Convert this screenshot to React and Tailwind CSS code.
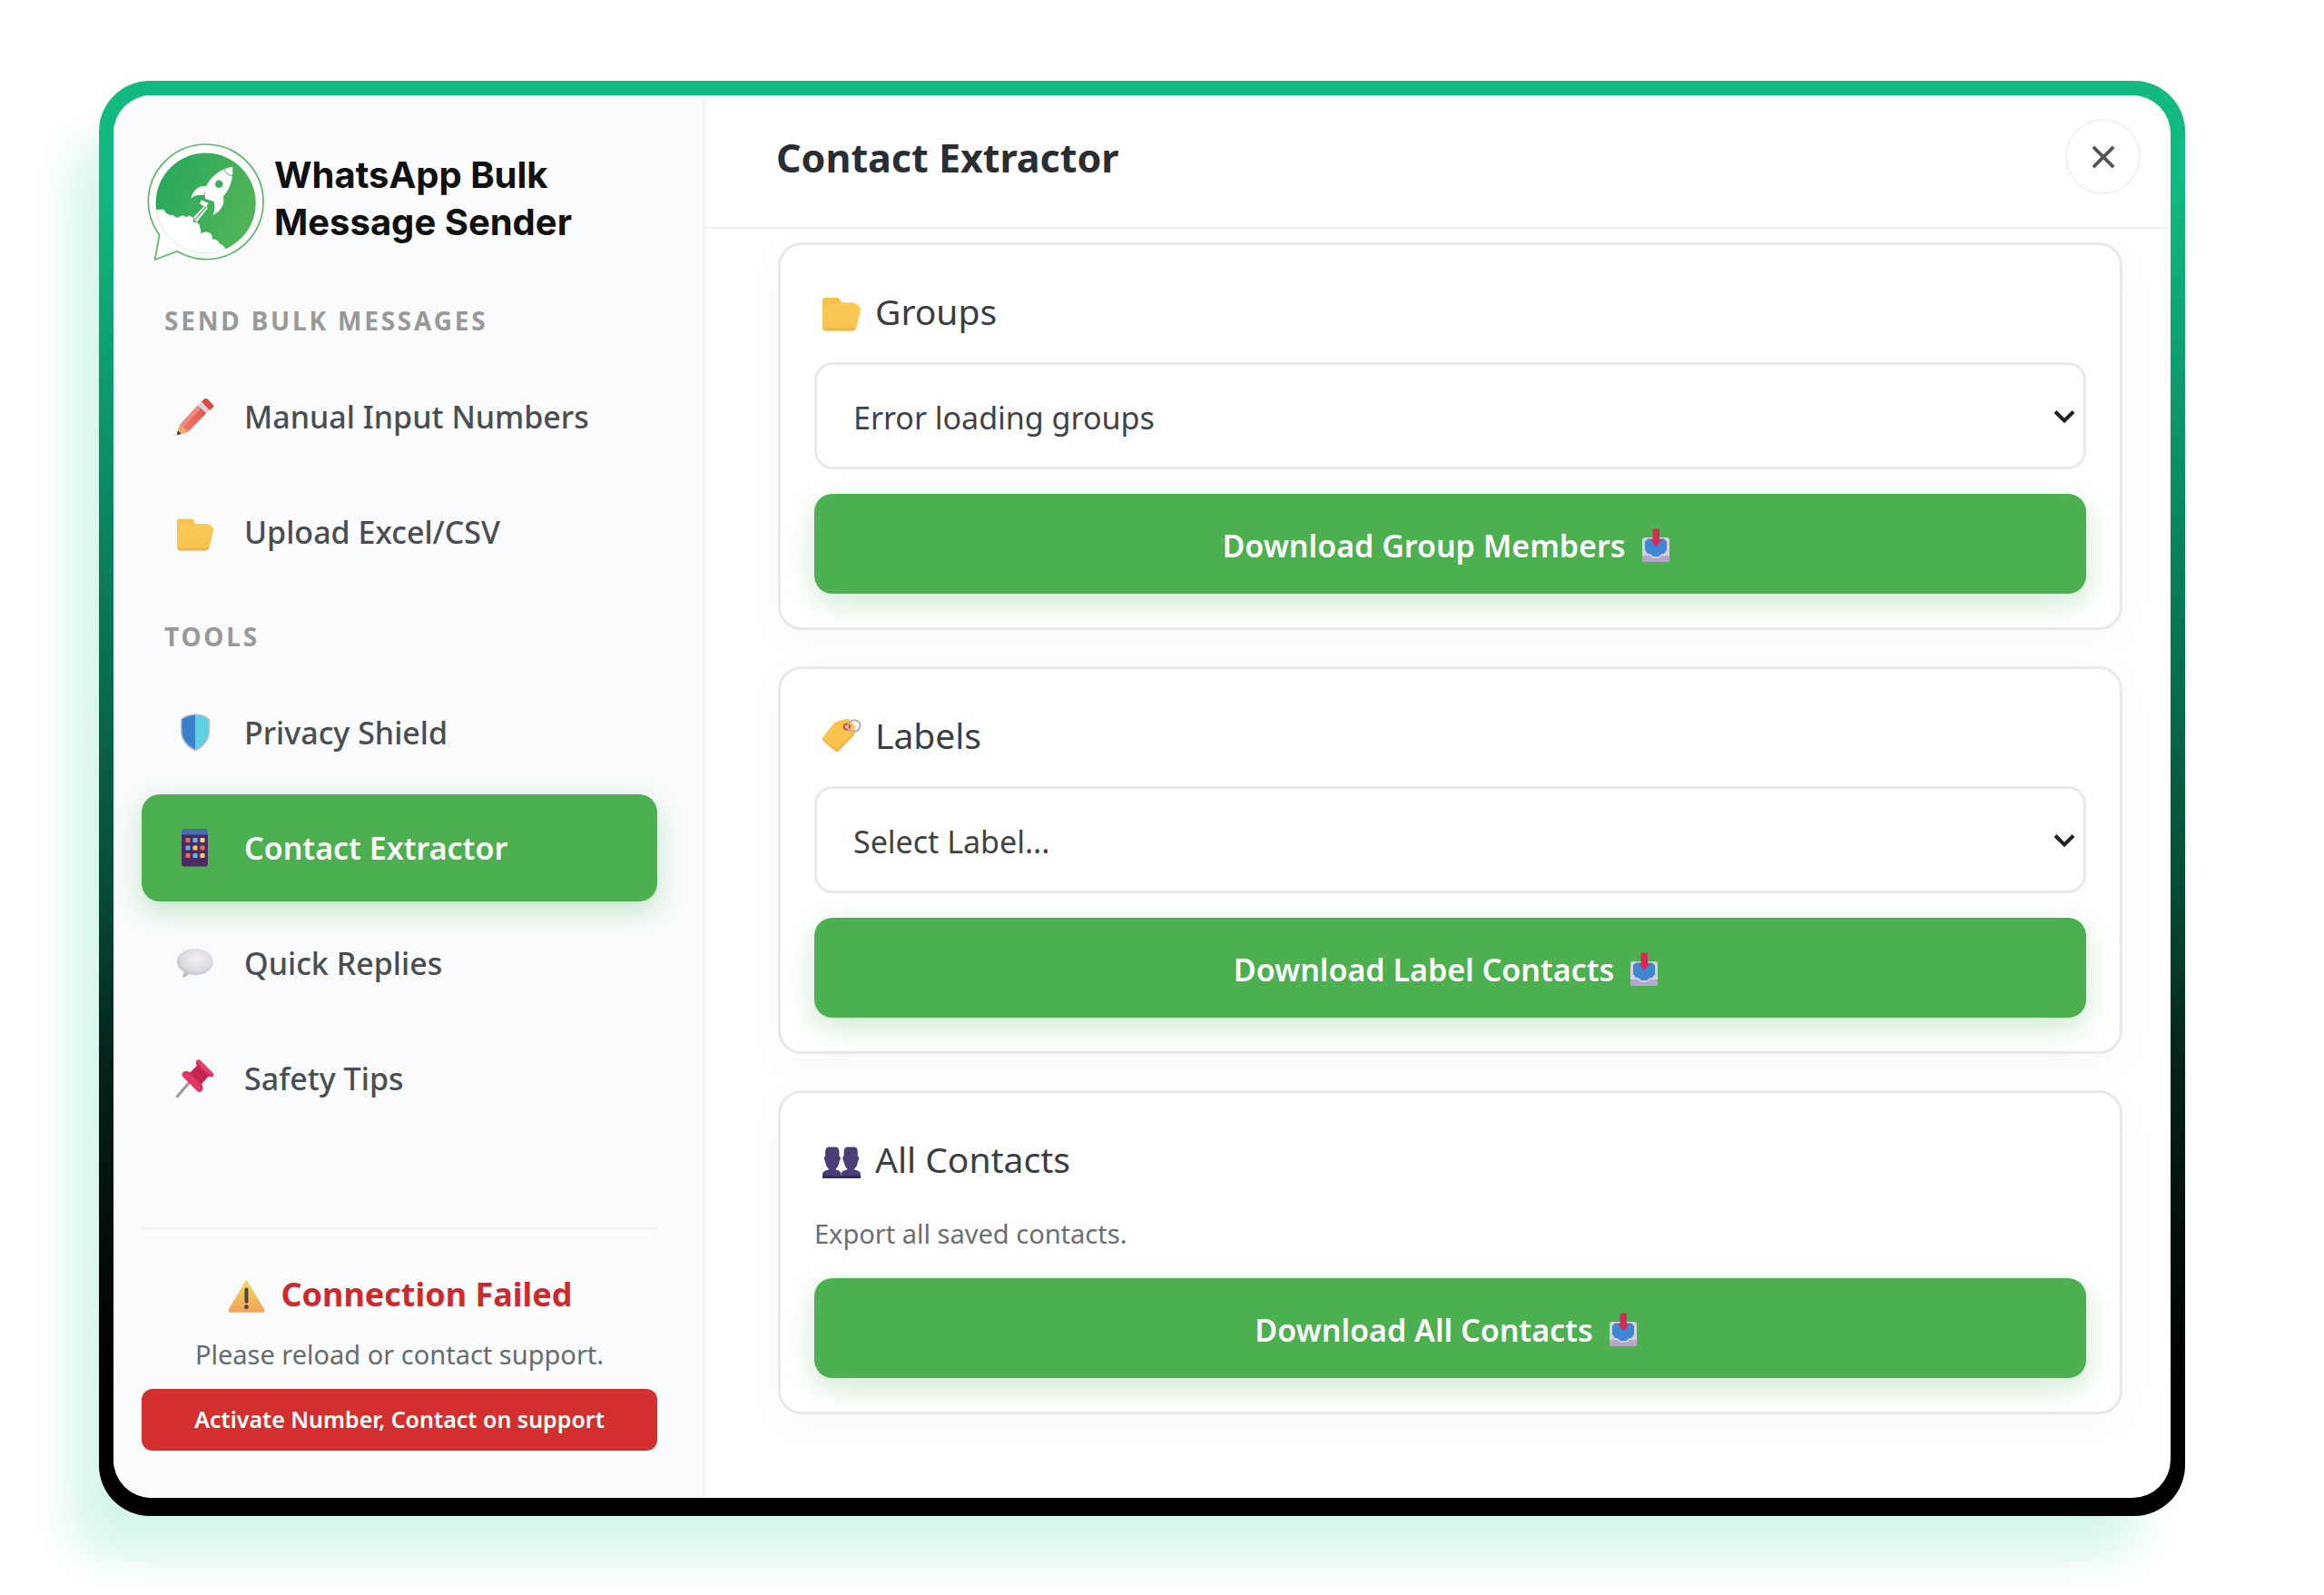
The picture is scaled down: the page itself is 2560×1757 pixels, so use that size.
import React from "react";

/* ---------- Brand mark ---------- */

function BrandMark() {
  return (
    <svg viewBox="36 52 392 392" className="size-[130px] shrink-0" aria-hidden="true">
      <defs>
        <linearGradient id="brand" x1="0" y1="0.3" x2="1" y2="0.7">
          <stop offset="0" stopColor="#27a85c" />
          <stop offset="1" stopColor="#55b556" />
        </linearGradient>
        <clipPath id="disc">
          <circle cx="231" cy="250" r="166" />
        </clipPath>
      </defs>
      <path
        d="M62 438 L77 356 C52 322 40 288 40 246 A191 191 0 1 1 231 437 C196 437 164 426 136 410 Z"
        fill="#fff"
        stroke="#5cb56a"
        strokeWidth="5"
        strokeLinejoin="round"
      />
      <g clipPath="url(#disc)">
        <rect x="60" y="80" width="340" height="340" fill="url(#brand)" />
        <path
          d="M50 272 L92 271 Q98 290 124 290 Q134 304 146 294 Q158 288 166 297 Q178 286 190 300 L190 314 Q213 312 212 334 Q218 344 212 352 Q234 340 248 352 Q254 360 252 370 Q270 368 278 386 Q288 388 298 404 L298 450 L50 450 Z"
          fill="#fff"
        />
        <path d="M190 298 L226 260 L238 266 L200 314 Z" fill="#fff" />
        <path d="M196 304 L231 264" stroke="#3bad5a" strokeWidth="4" fill="none" />
      </g>
      <path d="M320 130 C285 133 246 160 232 196 C228 210 226 222 230 236 L262 246 C298 232 324 186 320 130 Z" fill="#fff" />
      <path d="M292 138 C298 152 308 158 322 160" stroke="#41ae59" strokeWidth="3" fill="none" />
      <circle cx="275" cy="187" r="13" fill="#3fae59" />
      <path d="M234 193 C206 192 190 206 181 235 C194 224 206 221 224 224 Z" fill="#fff" />
      <path d="M288 226 C296 250 286 274 254 291 C262 276 262 262 258 246 Z" fill="#fff" />
      <path d="M215 240 L240 250 L232 264 L212 254 Z" fill="#fff" />
      <path d="M218 234 L244 250" stroke="#3bad5a" strokeWidth="3" />
    </svg>
  );
}

/* ---------- Emoji-style icons ---------- */

function Icon({ className, children }) {
  return (
    <svg viewBox="0 0 42 42" className={`shrink-0 overflow-visible ${className}`} aria-hidden="true">
      {children}
    </svg>
  );
}

function PencilIcon({ className }) {
  return (
    <Icon className={className}>
      <defs>
        <linearGradient id="pencil" x1="1" y1="0" x2="0" y2="1">
          <stop offset="0" stopColor="#e2504f" />
          <stop offset="1" stopColor="#f0806a" />
        </linearGradient>
      </defs>
      <path d="M24 8.500 L33.500 17 L13 38 L4 30 Z" fill="url(#pencil)" />
      <path d="M24 8.500 L27.500 12 L7.500 33 L4 30 Z" fill="#f08a80" />
      <path d="M4 30 L13 38 L2 41 Q0.500 41 1 39.500 Z" fill="#f3a56b" />
      <path d="M2 36.500 L5.500 40 L2 41 Q0.500 41 1 39.500 Z" fill="#3f3444" />
      <path d="M24 8.500 L28 4.500 L37 13 L33.500 17 Z" fill="#ddd3dc" />
      <path d="M28 4.500 L31 1.500 Q33 0 35 2 L40.500 7.500 Q42 9.500 40.500 11 L37 14 Z" fill="#dc4a48" />
    </Icon>
  );
}

function FolderIcon({ className }) {
  return (
    <Icon className={className}>
      <defs>
        <linearGradient id="folder" x1="0" y1="0" x2="0" y2="1">
          <stop offset="0" stopColor="#fbcb55" />
          <stop offset="1" stopColor="#f8c453" />
        </linearGradient>
      </defs>
      <path d="M1 9 Q1 6.500 3.500 6.500 H16.500 Q18 6.500 19 8 L21.500 12 H32 Q36 12 36 16 V39 H1 Z" fill="#f8c24c" />
      <path
        d="M3 16 Q3.500 13 7 13 H20 Q21.500 13 22.500 12 H34 Q36 12 37.500 13.500 L40.500 16.500 Q41.500 17.500 41.200 19 L36.500 38.500 Q35.500 41.500 32 41.500 H5 Q1 41.500 1 37.500 Z"
        fill="url(#folder)"
      />
      <path d="M1.200 38.500 Q2 41.500 5 41.500 H32 Q35.500 41.500 36.500 38.500 Z" fill="#e6ad4c" opacity=".6" />
    </Icon>
  );
}

function ShieldIcon({ className }) {
  return (
    <Icon className={className}>
      <path
        d="M21 0.500 C16 0.500 11 1.500 6.500 5 Q5 6 5 8 V19 C5 30 13 38 21 41.500 C29 38 37 30 37 19 V8 Q37 6 35.500 5 C31 1.500 26 0.500 21 0.500 Z"
        fill="#b4b9c8"
      />
      <path d="M21 2 C16 2 11 3.500 6.500 6.500 V19 C6.500 29 14 36 21 39.500 Z" fill="#3a80cc" />
      <path d="M21 2 C26 2 31 3.500 35.500 6.500 V19 C35.500 29 28 36 21 39.500 Z" fill="#5ed0e0" />
    </Icon>
  );
}

function PhoneIcon({ className }) {
  const colors = ["#ee6a50", "#5bb8f0", "#f9d36b", "#5bb8f0", "#f9c84e", "#ee6a50", "#ee6a50", "#5bb8f0", "#f9d36b"];
  return (
    <Icon className={className}>
      <rect x="6" y="0.500" width="29" height="41" rx="3" fill="#4b2b63" />
      <path d="M6 6.500 V3.500 Q6 0.500 9 0.500 H32 Q35 0.500 35 3.500 V6.500 Z" fill="#4a6fb0" />
      {colors.map((c, i) => (
        <rect key={i} x={10.5 + (i % 3) * 8} y={10 + Math.floor(i / 3) * 8.5} width="5" height="5" rx="1.200" fill={c} />
      ))}
    </Icon>
  );
}

function BubbleIcon({ className }) {
  return (
    <Icon className={className}>
      <defs>
        <radialGradient id="bubble" cx=".55" cy=".35" r=".7">
          <stop offset="0" stopColor="#f1eff3" />
          <stop offset=".6" stopColor="#dddbe2" />
          <stop offset="1" stopColor="#b8b0c4" />
        </radialGradient>
      </defs>
      <path
        d="M21 5 C32 5 41 11 41 19.500 C41 28 32 34 21.500 34 C19 34 17 33.700 15 33 L9 36.500 Q7 37 7.500 35 L8.500 30.500 C4 28 1 24 1 19.500 C1 11 10 5 21 5 Z"
        fill="url(#bubble)"
      />
    </Icon>
  );
}

function PinIcon({ className }) {
  return (
    <Icon className={className}>
      <path d="M14 26 L1.500 40.500" stroke="#9b9aa0" strokeWidth="3.200" strokeLinecap="round" />
      <path
        d="M22.500 1.500 Q25 -0.500 27.500 2 L40.500 15 Q42.500 18 39 19.500 L35.500 18.500 L28 27 Q31 33 27.500 35.500 Q25 36.500 22.500 34 L7.500 19 Q5 16 8 14 Q11 12 15.500 14.500 L23 7 Q21 4 22.500 1.500 Z"
        fill="#cf2a57"
      />
      <path d="M23 7 L35.500 18.500 L28 27 L15.500 14.500 Z" fill="#c4264f" />
      <path d="M22.500 1.500 Q25 -0.500 27.500 2 L40.500 15 Q42 17 40.500 18.500 Q30 14 22.500 1.500 Z" fill="#e3426f" />
      <path d="M7 18.500 Q7 14 11 14 Q22 20 28.500 32 Q28 36 25 36 Z" fill="#e23763" />
    </Icon>
  );
}

function WarningIcon({ className }) {
  return (
    <Icon className={className}>
      <defs>
        <linearGradient id="warn" x1="0" y1="0" x2="0" y2="1">
          <stop offset="0" stopColor="#fbd65c" />
          <stop offset="1" stopColor="#eda558" />
        </linearGradient>
      </defs>
      <path d="M19.500 7.500 Q20.500 5.500 21.500 7.500 L38.500 36 Q39.500 39 36.500 39 H4.500 Q1.500 39 2.500 36 Z" fill="url(#warn)" />
      <path d="M20.500 16 V28" stroke="#4d4340" strokeWidth="3.600" strokeLinecap="round" />
      <circle cx="20.500" cy="33.500" r="2.200" fill="#4d4340" />
    </Icon>
  );
}

function TagIcon({ className }) {
  return (
    <Icon className={className}>
      <path
        d="M26 3.500 L15 7 Q13.500 7.500 12.500 9 L1 23.500 Q0 25 1.500 26.500 L14.500 38 Q16.500 39 18 37.500 L34 21 Q35 20 35 18 V11 L29 4.500 Q27.500 3 26 3.500 Z"
        fill="#fac44f"
      />
      <path d="M1 24.500 L1.500 26.500 L14.500 38 Q16.500 39 18 37.500 L34 21 L35 17 L16 34.500 Z" fill="#f2ad49" opacity=".6" />
      <circle cx="26.500" cy="12" r="3" fill="#f0b9a6" stroke="#d64a43" strokeWidth="2" />
      <path d="M27 12.500 Q28.500 5 35 5 Q41 6 40.500 11 Q39.500 17 33.500 17 Q29.500 16.500 27 13" fill="none" stroke="#b3b0b6" strokeWidth="1.800" />
    </Icon>
  );
}

function PeopleIcon({ className }) {
  return (
    <Icon className={className}>
      <g fill="#4a3d78">
        <path d="M8 8 H14.500 Q18.500 8 18.500 13 V17 L20 20 L18.500 24 Q17 30 15 31 V32 Q20.500 33 20.500 37 V40 H1 V37 Q1 33 7.500 32 V31 Q5 29 4 24 L2.500 20 L4 17 V13 Q4 8 8 8 Z" />
        <path d="M27.500 8 H34 Q38 8 38 13 V17 L39.500 20 L38 24 Q37 29 34.500 31 V32 Q41 33 41 37 V40 H20.500 V37 Q20.500 33 27 32 V31 Q25 30 23.500 24 L22 20 L23.500 17 V13 Q23.500 8 27.500 8 Z" />
      </g>
      <path d="M1 38.500 H41 V41 H1 Z" fill="#2f2a52" />
    </Icon>
  );
}

function InboxIcon({ className }) {
  return (
    <Icon className={className}>
      <rect x="6" y="12" width="30" height="27" rx="3" fill="#d5d0de" />
      <path d="M6 32 H14 L18 35 H24 L28 32 H36 V36 Q36 39 33 39 H9 Q6 39 6 36 Z" fill="#b6a6c9" />
      <path d="M12 13.500 H30 L33 16.500 V26 L30 30 H27.500 L24 33 H18 L14.500 30 H12 L9 26 V16.500 Z" fill="#3f86d3" />
      <path d="M17.500 3.500 Q17.500 2.500 18.500 2.500 H24 Q25 2.500 25 3.500 V14.500 H27.500 L21.200 22 L15 14.500 H17.500 Z" fill="#d32d57" />
    </Icon>
  );
}

/* ---------- Sidebar ---------- */

const sections = [
  {
    title: "SEND BULK MESSAGES",
    items: [
      { label: "Manual Input Numbers", icon: PencilIcon },
      { label: "Upload Excel/CSV", icon: FolderIcon },
    ],
  },
  {
    title: "TOOLS",
    items: [
      { label: "Privacy Shield", icon: ShieldIcon },
      { label: "Contact Extractor", icon: PhoneIcon, active: true },
      { label: "Quick Replies", icon: BubbleIcon },
      { label: "Safety Tips", icon: PinIcon },
    ],
  },
];

function NavItem({ label, icon: Glyph, active }) {
  return (
    <button
      type="button"
      aria-current={active ? "page" : undefined}
      className={`flex h-[118px] w-full items-center gap-[33px] rounded-[20px] pl-[38px] text-left text-[34px] ${
        active
          ? "bg-[#4caf50] font-semibold text-white shadow-[0_10px_30px_rgba(76,175,80,0.3)]"
          : "font-medium text-[#4a4d52]"
      }`}
    >
      <Glyph className="size-[42px]" />
      <span>{label}</span>
    </button>
  );
}

function Sidebar() {
  return (
    <aside className="flex w-[652px] shrink-0 flex-col border-r-3 border-[#f1f3f4] bg-[#f9fbfc] pt-[53px] pr-[50px] pb-[52px] pl-[31px]">
      <div className="flex items-center gap-[10px] pl-[6px]">
        <BrandMark />
        <div className="pb-2 font-['Inter',sans-serif] text-[40px] leading-[52px] font-bold whitespace-nowrap text-[#111]">
          WhatsApp Bulk
          <br />
          Message Sender
        </div>
      </div>

      <nav className="mt-[9px]">
        {sections.map((section) => (
          <section key={section.title}>
            <h2 className="mt-9 mb-[27px] pl-[25px] text-[28px] leading-10 font-bold tracking-widest text-[#999]">
              {section.title}
            </h2>
            <div className="flex flex-col gap-[9px]">
              {section.items.map((item) => (
                <NavItem key={item.label} {...item} />
              ))}
            </div>
          </section>
        ))}
      </nav>

      <footer className="mt-auto flex flex-col items-center border-t-2 border-[#eef0f0] pt-11">
        <p className="flex items-center gap-[14px] text-[36px] leading-[56px] font-bold text-[#ce2a2e]">
          <WarningIcon className="size-[46px]" />
          Connection Failed
        </p>
        <p className="mt-4 text-[29px] leading-[44px] text-[#666b70]">Please reload or contact support.</p>
        <button
          type="button"
          className="mt-4 h-[68px] w-full rounded-xl bg-[#d32f2f] text-[25px] font-semibold text-white"
        >
          Activate Number, Contact on support
        </button>
      </footer>
    </aside>
  );
}

/* ---------- Main panel ---------- */

function Card({ icon: Glyph, title, field, children }) {
  return (
    <section className="rounded-[26px] border-3 border-[#e8e9ea] bg-white p-[37px] shadow-[0_10px_50px_rgba(0,0,0,0.03)]">
      <h3 className="mb-5 flex h-[72px] items-center gap-[15px] pl-2 text-[39px] font-normal text-[#3a3d44]">
        <Glyph className="size-11" />
        {field ? <label htmlFor={field}>{title}</label> : title}
      </h3>
      {children}
    </section>
  );
}

function SelectField({ id, placeholder }) {
  return (
    <div className="relative mb-[27px]">
      <select
        id={id}
        className="h-[118px] w-full appearance-none rounded-[20px] border-3 border-[#e8e9ea] bg-white pt-1 pr-16 pl-10 text-[34px] text-[#3f4248]"
      >
        <option>{placeholder}</option>
      </select>
      <svg
        viewBox="0 0 24 16"
        className="pointer-events-none absolute top-[52px] right-3 h-4 w-6"
        fill="none"
        stroke="#222"
        strokeWidth="4"
        aria-hidden="true"
      >
        <path d="M2 2.500 L12 12.500 L22 2.500" />
      </svg>
    </div>
  );
}

function DownloadButton({ children }) {
  return (
    <button
      type="button"
      className="flex h-[110px] w-full items-center justify-center gap-3 rounded-[20px] bg-[#4caf50] pt-1 pr-1 text-[34px] font-semibold text-white shadow-[0_10px_32px_rgba(76,175,80,0.28)]"
    >
      {children}
      <InboxIcon className="size-[42px]" />
    </button>
  );
}

export default function App() {
  return (
    <div className="bg-white pt-[89px] pr-[153px] pb-[87px] pl-[109px] font-['Noto_Sans',sans-serif]">
      <div className="rounded-[56px] bg-[linear-gradient(180deg,#12b981_0%,#12b981_7%,#0a8a62_29%,#054a35_57%,#06231b_68%,#020a07_83%,#000_92%)] px-4 pt-4 pb-5 shadow-[-40px_55px_50px_-10px_#d5f6ec]">
        <div className="flex overflow-hidden rounded-[42px] bg-white">
          <Sidebar />
          <main className="min-w-0 flex-1">
            <header className="flex items-center justify-between border-b-2 border-[#f1f2f3] pt-[26px] pr-[33px] pb-9 pl-[78px]">
              <h1 className="pt-1 text-[43px] font-bold text-[#2a2d31]">Contact Extractor</h1>
              <button
                type="button"
                aria-label="Close"
                className="flex size-[83px] items-center justify-center rounded-full border-2 border-[#f0f1f2]"
              >
                <svg viewBox="0 0 28 28" className="size-[26px]" stroke="#555" strokeWidth="4" aria-hidden="true">
                  <path d="M2 2 L26 26 M26 2 L2 26" />
                </svg>
              </button>
            </header>

            <div className="flex flex-col gap-10 pt-[15px] pr-[53px] pb-[92px] pl-20">
              <Card icon={FolderIcon} title="Groups" field="group">
                <SelectField id="group" placeholder="Error loading groups" />
                <DownloadButton>Download Group Members</DownloadButton>
              </Card>
              <Card icon={TagIcon} title="Labels" field="label">
                <SelectField id="label" placeholder="Select Label..." />
                <DownloadButton>Download Label Contacts</DownloadButton>
              </Card>
              <Card icon={PeopleIcon} title="All Contacts">
                <p className="mt-[26px] mb-[29px] text-[29px] leading-10 text-[#6b6e72]">Export all saved contacts.</p>
                <DownloadButton>Download All Contacts</DownloadButton>
              </Card>
            </div>
          </main>
        </div>
      </div>
    </div>
  );
}
